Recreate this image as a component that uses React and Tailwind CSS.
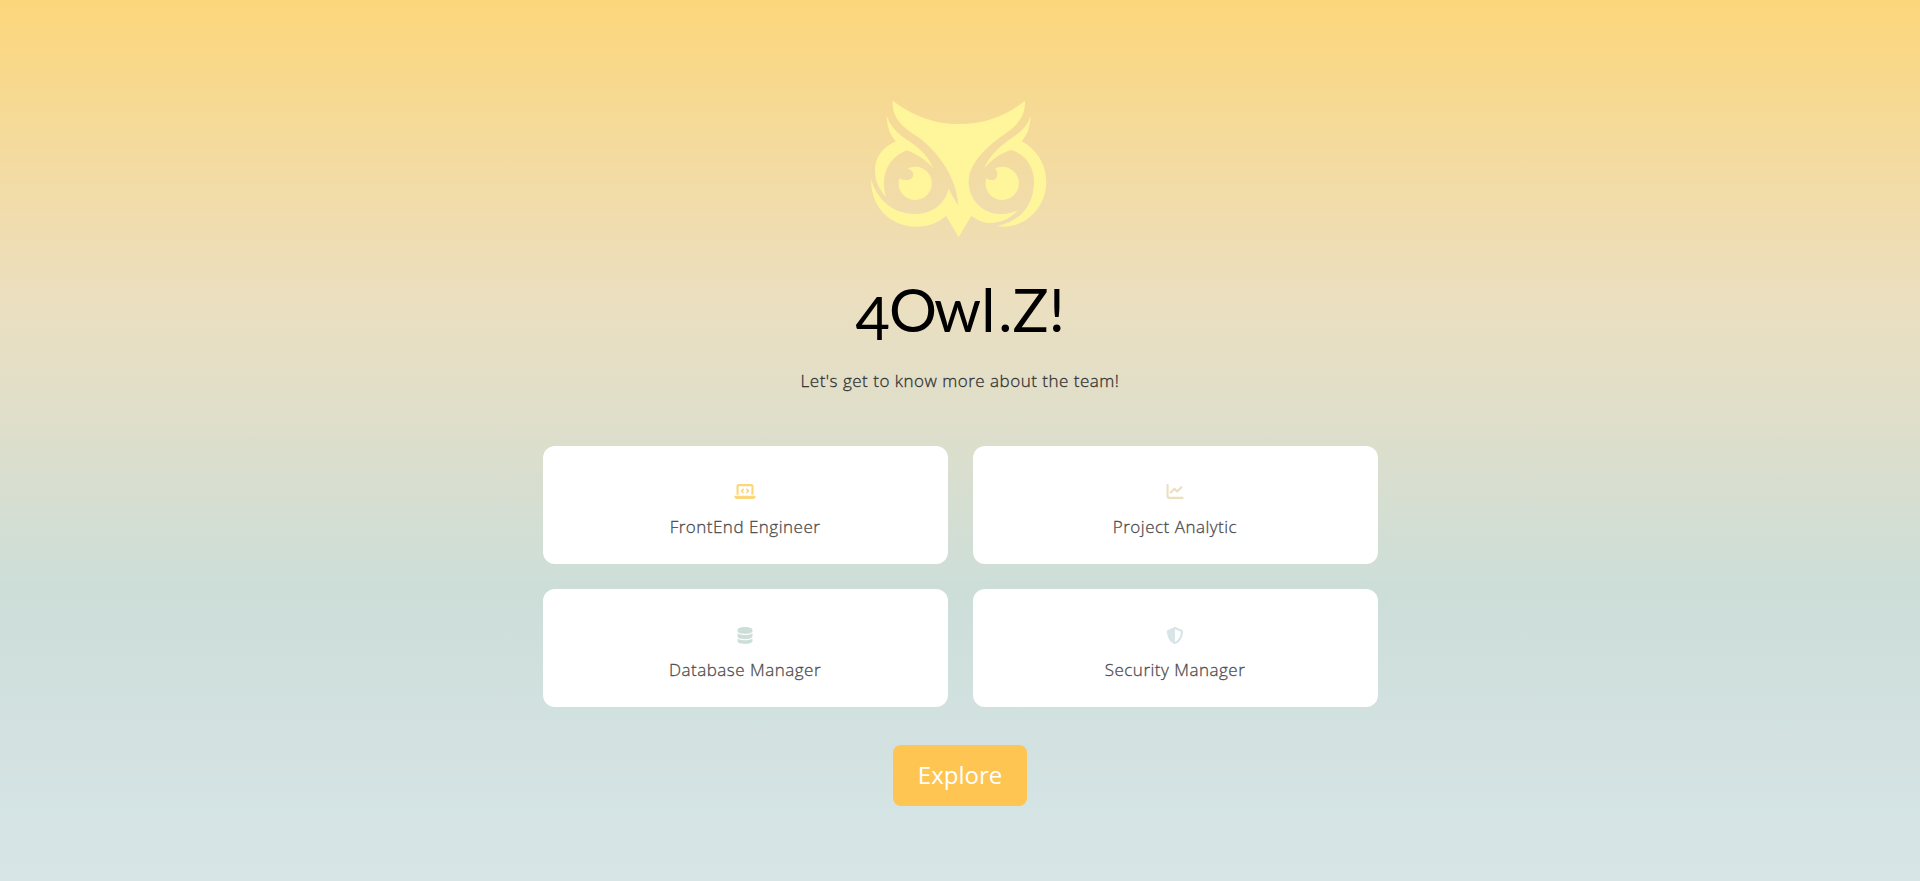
import { FaLaptopCode, FaChartLine, FaDatabase, FaShieldHalved } from "react-icons/fa6";

const roles = [
  { label: "FrontEnd Engineer", Icon: FaLaptopCode, color: "text-[#fcd67c]" },
  { label: "Project Analytic", Icon: FaChartLine, color: "text-[#ecdfbf]" },
  { label: "Database Manager", Icon: FaDatabase, color: "text-[#cdded9] relative top-px" },
  { label: "Security Manager", Icon: FaShieldHalved, color: "text-[#d7e5e7] relative top-px" },
];

function OwlLogo() {
  return (
    <svg viewBox="60 60 531 414" className="mr-1 h-[138px] w-[177px]" fill="#fff59a" aria-hidden="true">
      <path d="M128 62Q220 132 326 132Q440 132 525 62C527 110 500 138 465 162C420 192 357 245 356 305C356 360 400 403 455 402C475 401 492 396 505 390C490 405 470 428 420 429C395 428 375 416 364 407L326 472L288 407C265 428 235 440 200 440C120 440 62 380 63 298C80 355 125 402 195 402C245 400 285 375 295 326L325 378C322 300 270 220 205 172C165 145 125 120 128 62Z" />
      <path d="M110 106C118 135 140 160 175 182C215 208 238 235 250 265C225 238 200 222 170 211C115 233 90 285 108 351C85 325 75 300 75 270C75 230 100 200 138 184C120 165 110 140 110 106Z" />
      <path d="M542 106C541 140 532 165 515 184C560 207 589 255 589 305C589 380 530 440 460 440L441 438C510 425 552 375 552 305C552 260 525 220 483 210C455 218 425 238 403 265C415 235 440 205 480 178C515 155 535 135 542 106Z" />
      <path d="M148 295C158 303 189 304 190 284C190 274 182 267 172 266A50 50 0 1 1 148 295Z" />
      <path d="M409 295C419 303 441 304 442 284C442 274 440 267 433 266A50 50 0 1 1 409 295Z" />
    </svg>
  );
}

export default function App() {
  return (
    <main className="flex h-[881px] flex-col items-center bg-[linear-gradient(to_bottom,#fcd67b,#ecdfbf_33.3%,#cdded9_66.6%,#d7e5e7)] pt-[100px] font-['Open_Sans',sans-serif]">
      <OwlLogo />
      <h1 className="mt-[35px] flex h-[72px] items-baseline font-['Lato',sans-serif] text-[60px] leading-[72px] text-black">
        <span className="relative top-[8px] -mr-[1px]">4</span>
        <span className="-mr-[3px]">O</span>
        <span>w</span>
        <span className="mr-[3px]">l</span>
        <span>.Z!</span>
      </h1>
      <p className="mt-[23px] text-[17px] leading-[26px] font-light tracking-[0.5px] text-[#333] [-webkit-text-stroke:0.3px]">
        Let's get to know more about the team!
      </p>
      <div className="mt-[52px] grid grid-cols-2 gap-[25px]">
        {roles.map(({ label, Icon, color }) => (
          <div key={label} className="flex h-[118px] w-[405px] flex-col items-center rounded-xl bg-white pt-[37px]">
            <Icon className={`h-[17px] w-[22px] ${color}`} />
            <p className="mt-[14px] text-[17px] leading-[26px] font-light tracking-[0.5px] text-[#4d4d4d] [-webkit-text-stroke:0.3px]">{label}</p>
          </div>
        ))}
      </div>
      <button className="mt-[38px] h-[61px] w-[134px] rounded-lg bg-[#ffc553] pb-[2px] text-[24px] text-white">
        Explore
      </button>
    </main>
  );
}
